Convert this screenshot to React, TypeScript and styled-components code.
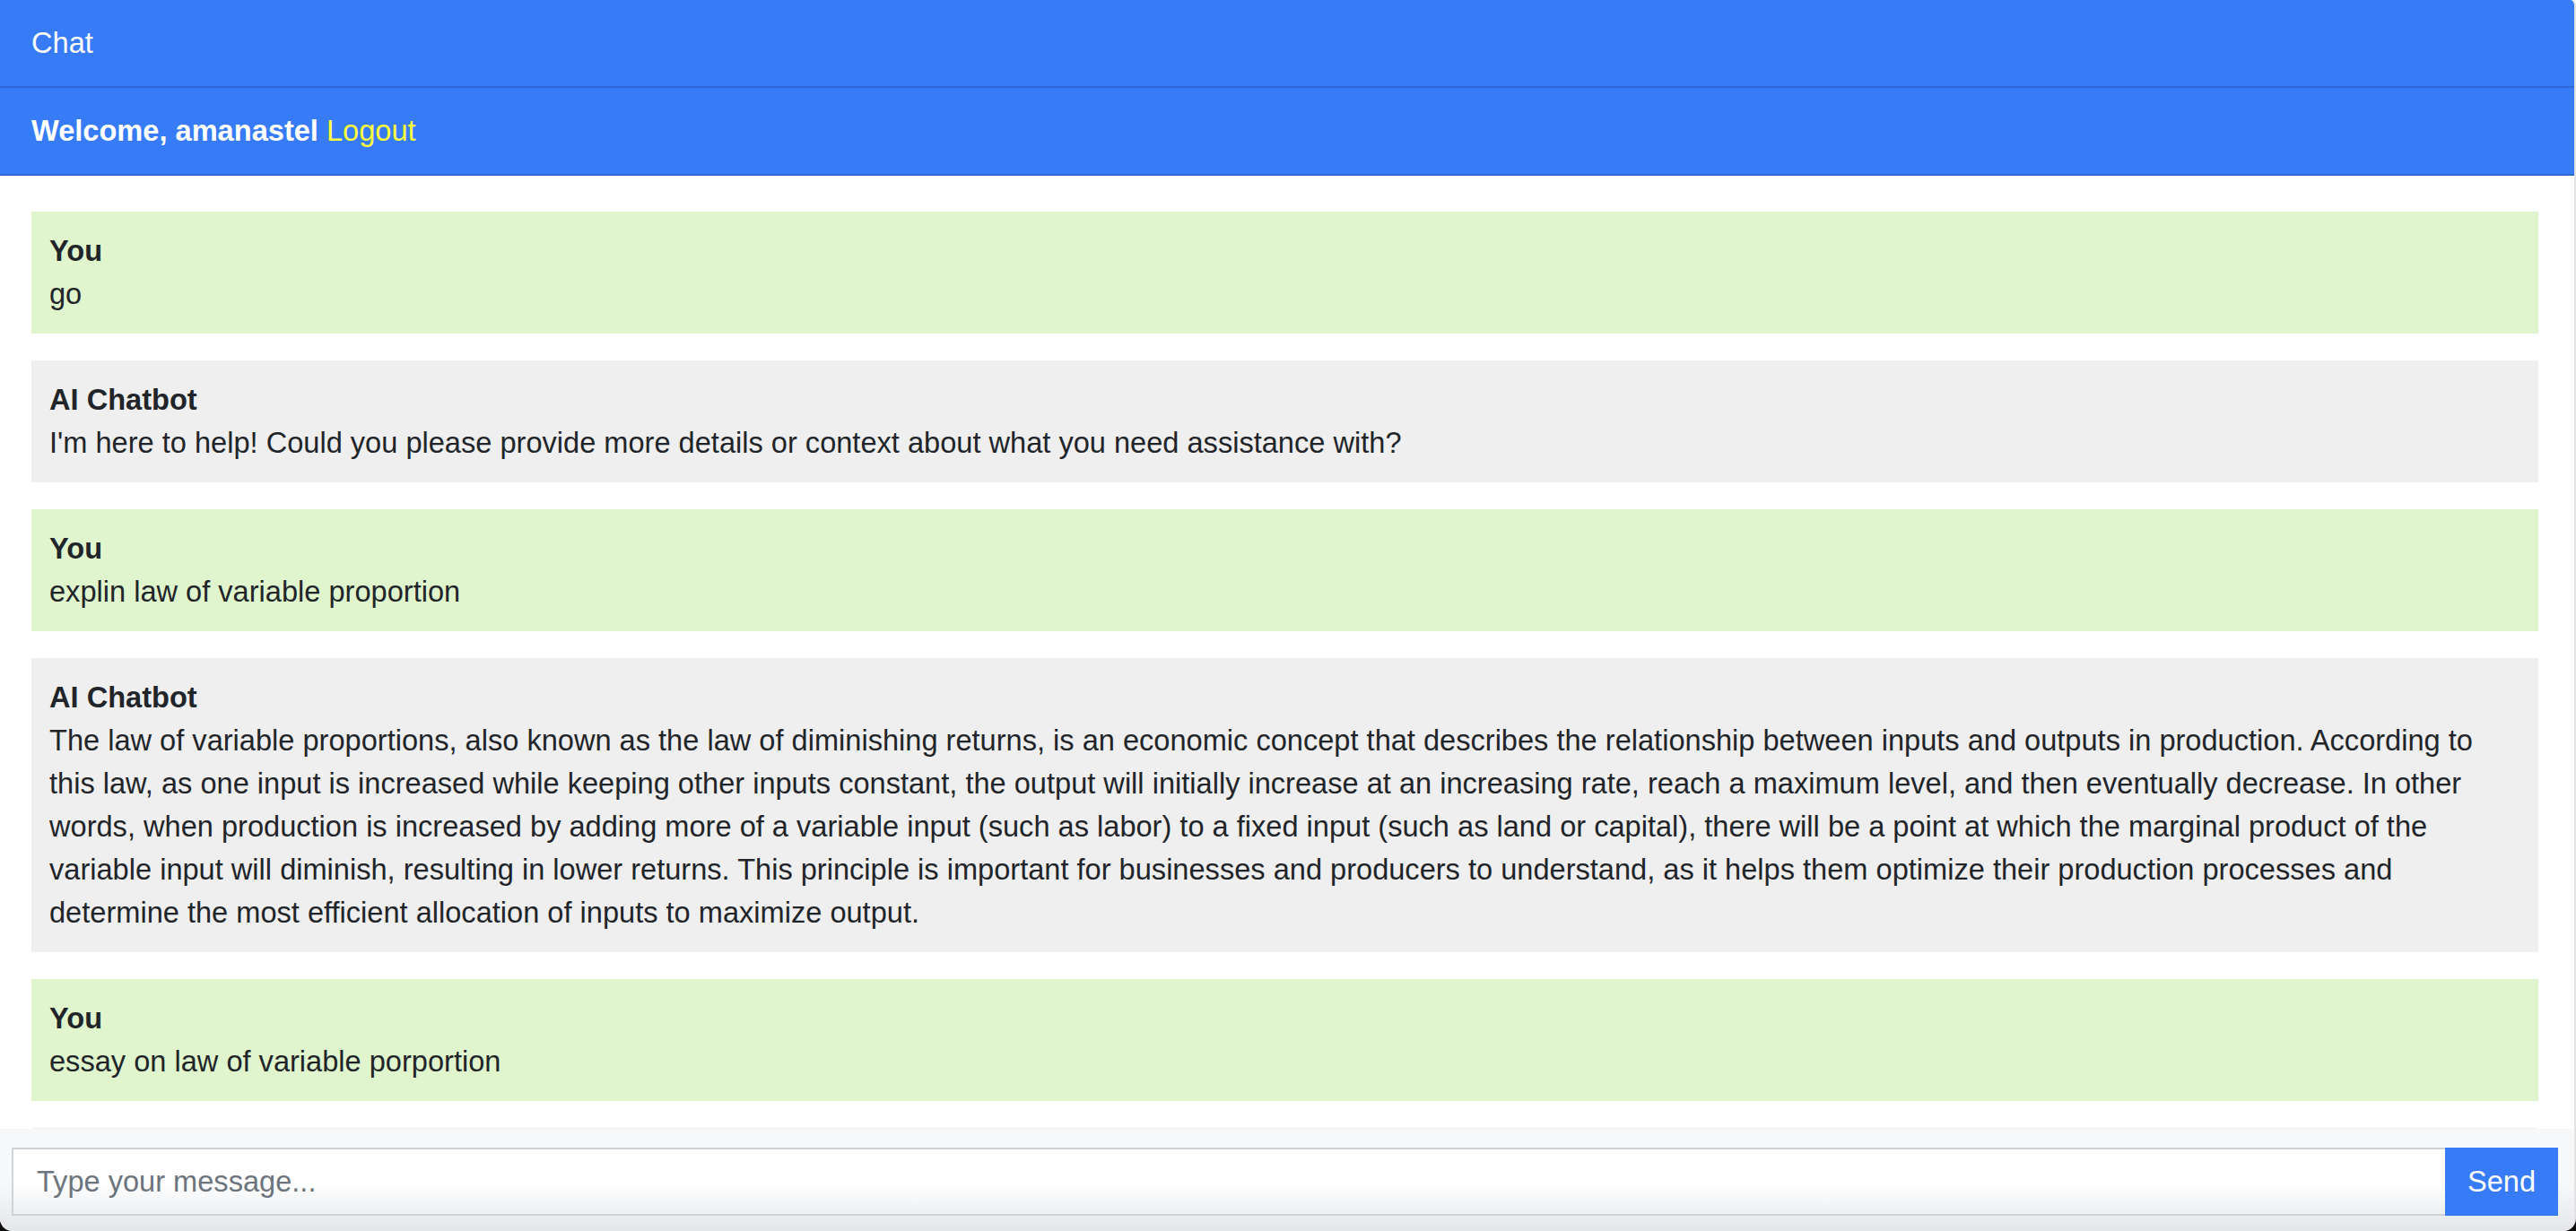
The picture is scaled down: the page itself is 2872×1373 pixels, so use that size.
import React from "react";
import styled, { createGlobalStyle } from "styled-components";

const GlobalStyle = createGlobalStyle`
  html, body {
    margin: 0;
    padding: 0;
  }
  body {
    background: linear-gradient(to bottom, #ffffff 0, #ffffff 1330px, #0c0c0c 1330px);
    font-family: "Liberation Sans", Arial, sans-serif;
  }
  * { box-sizing: border-box; }
`;

const Shell = styled.div`
  display: flex;
  flex-direction: column;
  height: 100vh;
  width: 100%;
  border-right: 2px solid #e2e2e2;
  border-radius: 0 6px 14px 14px;
  overflow: hidden;
  background: #ffffff;
`;

const Bar = styled.div<{ $bold?: boolean }>`
  display: flex;
  align-items: center;
  flex-shrink: 0;
  height: 98px;
  padding: 0 35px;
  background: #377bf6;
  border-bottom: 2px solid #2d68d6;
  color: #ffffff;
  font-size: 32.6px;
  line-height: 48px;
  font-weight: ${(p) => (p.$bold ? 700 : 400)};
`;

const LogoutLink = styled.a`
  color: #ffff3c;
  font-weight: 400;
  margin-left: 9px;
  text-decoration: none;
  cursor: pointer;
`;

const MessageList = styled.div`
  flex: 1;
  min-height: 0;
  overflow: hidden;
  display: flex;
  flex-direction: column;
  gap: 30px;
  padding: 40px 40px 0 35px;
`;

const Bubble = styled.div<{ $mine: boolean }>`
  flex-shrink: 0;
  min-height: 136px;
  padding: 20px;
  background: ${(p) => (p.$mine ? "#e0f5cd" : "#efefef")};
  color: #212529;
  font-size: 32.6px;
  line-height: 48px;
`;

const Sender = styled.div`
  font-weight: 700;
`;

const Footer = styled.form`
  display: flex;
  align-items: flex-start;
  flex-shrink: 0;
  height: 114px;
  padding: 21px 18px 0 13px;
  background: linear-gradient(to bottom, #f7f8fa 0, #f7f8fa 55%, #e5e6e9 100%);
`;

const MessageInput = styled.input`
  flex: 1;
  height: 76px;
  padding: 0 26px;
  border: 2px solid #ced3d8;
  border-right: none;
  border-radius: 0;
  outline: none;
  background: linear-gradient(to bottom, #ffffff 0, #ffffff 50%, #eef0f2 100%);
  color: #212529;
  font-family: "Liberation Sans", Arial, sans-serif;
  font-size: 32.6px;
  &::placeholder {
    color: #6c757d;
  }
`;

const SendButton = styled.button`
  width: 126px;
  height: 76px;
  border: none;
  border-radius: 0;
  background: #377bf6;
  color: #ffffff;
  font-family: "Liberation Sans", Arial, sans-serif;
  font-size: 32.6px;
  cursor: pointer;
`;

type Message = { mine: boolean; text: string };

const messages: Message[] = [
  { mine: true, text: "go" },
  {
    mine: false,
    text: "I'm here to help! Could you please provide more details or context about what you need assistance with?",
  },
  { mine: true, text: "explin law of variable proportion" },
  {
    mine: false,
    text: "The law of variable proportions, also known as the law of diminishing returns, is an economic concept that describes the relationship between inputs and outputs in production. According to this law, as one input is increased while keeping other inputs constant, the output will initially increase at an increasing rate, reach a maximum level, and then eventually decrease. In other words, when production is increased by adding more of a variable input (such as labor) to a fixed input (such as land or capital), there will be a point at which the marginal product of the variable input will diminish, resulting in lower returns. This principle is important for businesses and producers to understand, as it helps them optimize their production processes and determine the most efficient allocation of inputs to maximize output.",
  },
  { mine: true, text: "essay on law of variable porportion" },
];

export default function App() {
  return (
    <>
      <GlobalStyle />
      <Shell>
        <Bar>Chat</Bar>
        <Bar $bold>
          Welcome, amanastel<LogoutLink>Logout</LogoutLink>
        </Bar>
        <MessageList>
          {messages.map((m, i) => (
            <Bubble key={i} $mine={m.mine}>
              <Sender>{m.mine ? "You" : "AI Chatbot"}</Sender>
              <div>{m.text}</div>
            </Bubble>
          ))}
          <Bubble $mine={false} aria-hidden="true" />
        </MessageList>
        <Footer onSubmit={(e) => e.preventDefault()}>
          <MessageInput type="text" placeholder="Type your message..." />
          <SendButton type="submit">Send</SendButton>
        </Footer>
      </Shell>
    </>
  );
}
